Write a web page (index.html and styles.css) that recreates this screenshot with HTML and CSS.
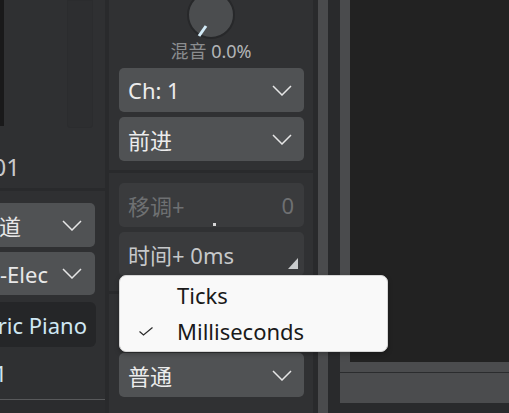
FILE: index.html
```html
<!DOCTYPE html>
<html lang="zh">
<head>
<meta charset="utf-8">
<link rel="stylesheet" href="styles.css">
</head>
<body>
<div class="app">
  <div class="left">
    <div class="lsec-top">
      <div class="lgraph">
        <div class="screen"></div>
        <div class="meter"></div>
      </div>
      <div class="ltime"><span class="cut cut-time"><span>0:01</span></span></div>
    </div>
    <div class="lsec-mid">
      <div class="ldrop">
        <span class="cut cut-a"><span>MIDI 通道</span></span>
        <svg class="chev" width="20" height="11" viewBox="0 0 20 11"><polyline points="1,1 10,10 19,1" fill="none" stroke="#e6e6e6" stroke-width="1.5"/></svg>
      </div>
      <div class="ldrop ldrop-2">
        <span class="cut cut-b"><span>Piano-Elec</span></span>
        <svg class="chev" width="20" height="11" viewBox="0 0 20 11"><polyline points="1,1 10,10 19,1" fill="none" stroke="#e6e6e6" stroke-width="1.5"/></svg>
      </div>
      <div class="lpiano"><span class="cut cut-c"><span>Electric Piano</span></span></div>
      <div class="lnum"><span class="cut cut-d"><span>1</span></span></div>
    </div>
    <div class="lsec-bot"></div>
  </div>

  <div class="mid">
    <div class="msec msec-1">
      <div class="knob">
        <svg width="48" height="48" viewBox="0 0 48 48">
          <circle cx="24" cy="24" r="23" fill="#4b4d4f" stroke="#27282a" stroke-width="2"/>
          <line x1="12" y1="45" x2="19" y2="35" stroke="#d3ebf8" stroke-width="3"/>
        </svg>
      </div>
      <div class="knob-label"><span class="dim">混音</span> 0.0%</div>
      <div class="drop"><span>Ch: 1</span><svg class="chev" width="20" height="11" viewBox="0 0 20 11"><polyline points="1,1 10,10 19,1" fill="none" stroke="#e6e6e6" stroke-width="1.5"/></svg></div>
      <div class="drop drop-next"><span>前进</span><svg class="chev" width="20" height="11" viewBox="0 0 20 11"><polyline points="1,1 10,10 19,1" fill="none" stroke="#e6e6e6" stroke-width="1.5"/></svg></div>
    </div>
    <div class="msec msec-2">
      <div class="field field-off"><span>移调+</span><span>0</span><i class="dot"></i></div>
      <div class="field field-time"><span>时间+ 0ms</span><svg class="grip" width="10" height="11" viewBox="0 0 10 11"><polygon points="10,0 10,11 0,11" fill="#c9cbcd"/></svg></div>
    </div>
    <div class="msec msec-3">
      <div class="drop"><span>普通</span><svg class="chev" width="20" height="11" viewBox="0 0 20 11"><polyline points="1,1 10,10 19,1" fill="none" stroke="#e6e6e6" stroke-width="1.5"/></svg></div>
    </div>
  </div>

  <div class="strip"></div>

  <div class="right">
    <div class="rtop">
      <div class="rstrip"></div>
      <div class="rdark"></div>
    </div>
    <div class="rband1"></div>
    <div class="rband2"></div>
  </div>

  <div class="menu">
    <div class="mi"><span class="mi-check"></span><span>Ticks</span></div>
    <div class="mi"><span class="mi-check"><svg width="14" height="9" viewBox="0 0 14 9"><polyline points="0.5,4.5 4.5,8 13.5,0.5" fill="none" stroke="#2a2a2a" stroke-width="1.2"/></svg></span><span>Milliseconds</span></div>
  </div>
</div>
</body>
</html>
```

FILE: styles.css
```css
* { box-sizing: border-box; }

body {
  margin: 0;
  background: #292a2c;
  font-family: "Noto Sans", "Noto Sans CJK SC", sans-serif;
  overflow: hidden;
}

.app {
  position: relative;
  display: flex;
  width: 509px;
  height: 413px;
  overflow: hidden;
}

/* ---------- left panel ---------- */
.left {
  width: 105px;
  flex: none;
  display: flex;
  flex-direction: column;
}

.lsec-top {
  height: 188px;
  background: #2f3032;
}

.lgraph {
  display: flex;
  height: 128px;
}

.screen {
  width: 4px;
  height: 126px;
  background: #19191a;
}

.meter {
  width: 26px;
  height: 128px;
  margin-left: 63px;
  background: #2d2e30;
  border: 1px solid #2b2c2e;
  border-radius: 0 0 3px 3px;
}

.cut {
  display: flex;
  justify-content: flex-end;
  overflow: hidden;
  white-space: nowrap;
  flex: none;
}

.cut > span { flex: none; }

.ltime {
  margin-top: 24px;
  font-size: 24px;
  line-height: 30px;
  color: #c8c9cb;
}

.cut-time { width: 20px; }

.lsec-mid {
  margin-top: 3px;
  height: 209px;
  background: #2f3032;
  border-bottom: 1px solid #58595b;
  padding-top: 12px;
}

.ldrop {
  height: 44px;
  margin-right: 10px;
  background: #505254;
  border-radius: 0 5px 5px 0;
  display: flex;
  align-items: center;
  justify-content: space-between;
  padding-right: 13px;
  color: #e8e8e8;
  font-size: 22px;
}

.ldrop-2 { margin-top: 5px; height: 43px; }

.cut-a { width: 21px; }
.cut-b { width: 48px; }

.lpiano {
  margin-top: 7px;
  margin-right: 9px;
  height: 45px;
  background: #252628;
  border-radius: 0 6px 6px 0;
  display: flex;
  align-items: center;
  color: #cfe7f3;
  font-size: 22px;
}

.cut-c { width: 87px; }

.lnum {
  margin-top: 11px;
  color: #cfe7f3;
  font-size: 22px;
}

.cut-d { width: 7px; }

.lsec-bot {
  flex: 1;
  background: #2b2c2e;
}

/* ---------- middle panel ---------- */
.mid {
  width: 204px;
  flex: none;
  margin-left: 4px;
  display: flex;
  flex-direction: column;
  gap: 3px;
}

.msec { background: #303133; }

.msec-1 {
  height: 170px;
  overflow: hidden;
}

.msec-2 {
  height: 118px;
  padding-top: 10px;
}

.msec-3 {
  flex: 1;
  padding-top: 59px;
}

.knob {
  display: flex;
  justify-content: center;
  height: 48px;
  margin-top: -9px;
}

.knob-label {
  margin-top: 1px;
  text-align: center;
  font-size: 18px;
  line-height: 22px;
  color: #b3b5b7;
}

.dim { color: #8b8d8f; }

.drop {
  height: 44px;
  margin: 6px 9px 0 10px;
  background: #505254;
  border-radius: 5px;
  display: flex;
  align-items: center;
  justify-content: space-between;
  padding: 0 12px 0 9px;
  color: #ececec;
  font-size: 22px;
}

.drop-next { margin-top: 5px; }
.msec-3 .drop { margin-top: 0; }

.chev { flex: none; }

.field {
  position: relative;
  height: 44px;
  margin: 0 9px 0 10px;
  background: #3a3b3d;
  border-radius: 5px;
  display: flex;
  align-items: center;
  justify-content: space-between;
  padding: 0 10px 0 9px;
  font-size: 22px;
}

.field-off { color: #6e7072; }

.field-time {
  margin-top: 5px;
  color: #c6c8ca;
}

.dot {
  position: absolute;
  left: 94px;
  top: 40px;
  width: 3px;
  height: 3px;
  background: #d6d6d6;
}

.grip {
  position: absolute;
  right: 6px;
  bottom: 7px;
}

/* ---------- right side ---------- */
.strip {
  width: 10px;
  flex: none;
  margin-left: 5px;
  background: #4a4b4d;
}

.right {
  flex: 1;
  margin-left: 12px;
  display: flex;
  flex-direction: column;
}

.rtop {
  height: 362px;
  display: flex;
}

.rstrip {
  width: 10px;
  background: #4a4b4d;
}

.rdark {
  flex: 1;
  background: #222222;
}

.rband1 {
  height: 10px;
  background: #4b4c4e;
  border-bottom: 1px solid #2b2c2e;
  box-sizing: content-box;
}

.rband2 {
  height: 30px;
  background: #4b4c4e;
}

/* ---------- popup menu ---------- */
.menu {
  position: absolute;
  left: 119px;
  top: 275px;
  width: 269px;
  height: 77px;
  padding-top: 1px;
  background: #f9f9f9;
  border: 1px solid #d6d6d6;
  border-radius: 7px;
  box-shadow: 0 2px 5px rgba(0, 0, 0, 0.25);
}

.mi {
  height: 36px;
  display: flex;
  align-items: center;
  padding-left: 19px;
  font-size: 22px;
  color: #1a1a1a;
}

.mi-check {
  width: 14px;
  height: 9px;
  margin-right: 24px;
  display: flex;
}
```
